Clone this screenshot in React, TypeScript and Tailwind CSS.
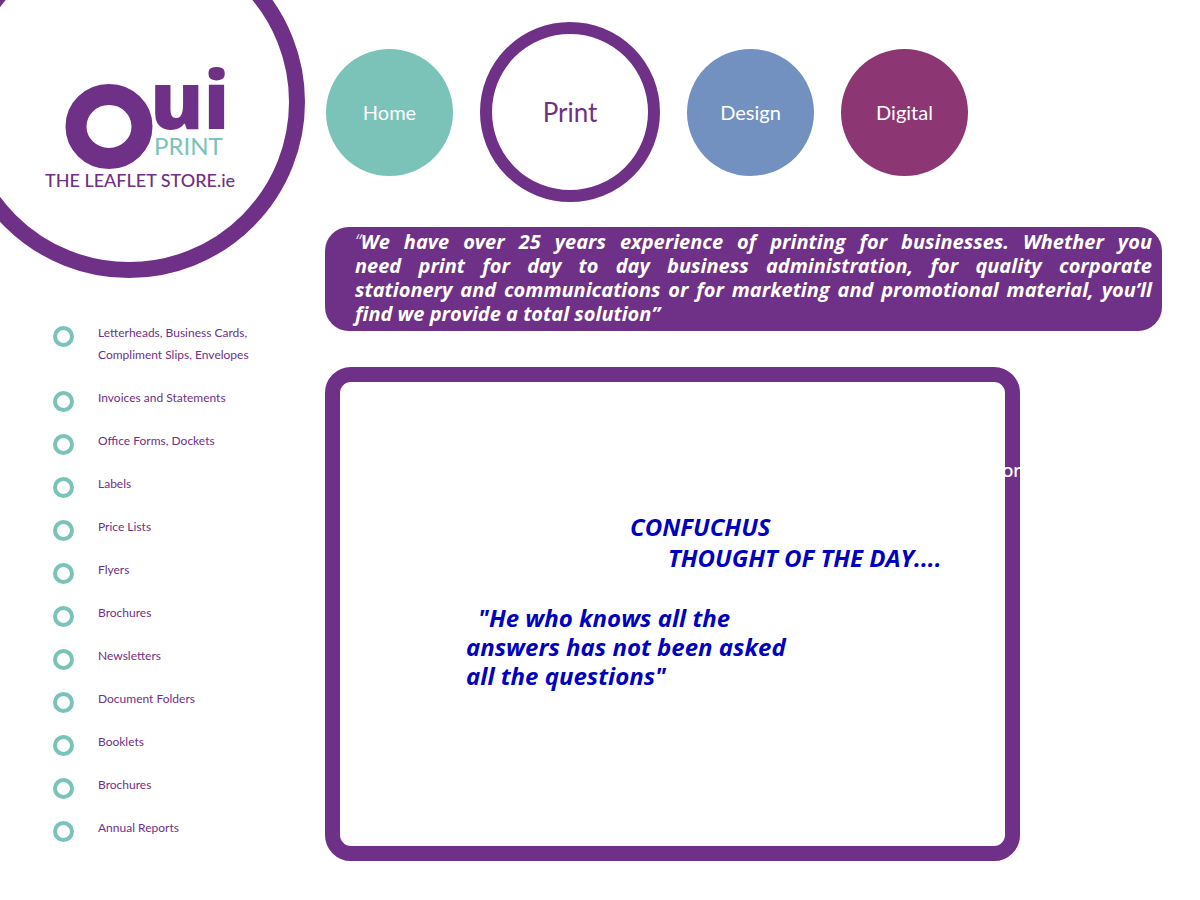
const services = [
  "Letterheads, Business Cards, Compliment Slips, Envelopes",
  "Invoices and Statements",
  "Office Forms, Dockets",
  "Labels",
  "Price Lists",
  "Flyers",
  "Brochures",
  "Newsletters",
  "Document Folders",
  "Booklets",
  "Brochures",
  "Annual Reports",
];

const navItems = [
  { label: "Home", className: "size-[127px] bg-[#7bc3b8] text-white text-[20px]" },
  { label: "Print", className: "size-[180px] border-12 border-[#6f3087] text-[#6f3087] text-[26px]" },
  { label: "Design", className: "size-[127px] bg-[#7291c1] text-white text-[20px]" },
  { label: "Digital", className: "size-[127px] bg-[#8c3673] text-white text-[20px]" },
];

const introLines = [
  "We have over 25 years experience of printing for businesses. Whether you",
  "need print for day to day business administration, for quality corporate",
  "stationery and communications or for marketing and promotional material, you’ll",
];

function Logo() {
  return (
    <a
      href="#"
      aria-label="Oui Print, The Leaflet Store.ie"
      className="-mt-[74px] -ml-[47px] block size-[352px] rounded-full border-16 border-[#6f3087] pt-[78px] pl-[76px]"
    >
      <svg width="200" height="175" viewBox="45 20 200 175" className="font-['Lato',sans-serif]">
        <ellipse cx="109" cy="126.500" rx="33" ry="32" fill="none" stroke="#6f3087" strokeWidth="21" />
        <text x="150" y="129" fontSize="80" fontWeight="800" fill="#6f3087" className="font-['Open_Sans',sans-serif]">ui</text>
        <text x="154" y="155" fontSize="24" fill="#7bc3b8">PRINT</text>
        <text x="45" y="187" fontSize="18" fontWeight="500" fill="#6f3087">THE LEAFLET STORE.ie</text>
      </svg>
    </a>
  );
}

function ServiceList() {
  return (
    <ul className="mt-11 flex flex-col gap-[21px] pl-[53px]">
      {services.map((service, i) => (
        <li key={i} className="flex items-start gap-6">
          <span className="mt-1 -mb-1 size-[21px] shrink-0 rounded-full border-4 border-[#7bc3b8]" />
          <a href="#" className="w-[160px] text-[12px] leading-[22px] text-[#6f3087]">
            {service}
          </a>
        </li>
      ))}
    </ul>
  );
}

export default function App() {
  return (
    <div className="flex min-h-screen overflow-hidden bg-white font-['Lato',sans-serif]">
      <aside className="w-[325px] shrink-0">
        <Logo />
        <ServiceList />
      </aside>

      <main className="min-w-0 flex-1 pt-[22px] pr-[38px] pb-10">
        <nav className="flex items-center gap-[27px] pl-px">
          {navItems.map((item) => (
            <a
              key={item.label}
              href="#"
              className={`flex shrink-0 items-center justify-center rounded-full ${item.className}`}
            >
              {item.label}
            </a>
          ))}
        </nav>

        <section className="mt-[25px] rounded-3xl bg-[#6f3087] pt-[3px] pb-[5px] pr-[10px] pl-[30px] font-['Open_Sans',sans-serif] text-[20px] leading-6 font-bold text-white italic">
          {introLines.map((line, i) => (
            <p key={line} className="text-justify [text-align-last:justify]">
              {i === 0 && <span className="font-light">“</span>}
              {line}
            </p>
          ))}
          <p>find we provide a total solution”</p>
        </section>

        <section className="relative mt-9 min-h-[494px] w-[83%] rounded-[26px] border-[15px] border-[#6f3087] pt-[129px] pl-[126px] font-['Open_Sans',sans-serif] text-[24px] font-bold text-[#0000c0] italic">
          <h1 className="pl-[164px] leading-[31px]">
            CONFUCHUS
            <span className="block pl-[38px]">THOUGHT OF THE DAY....</span>
          </h1>
          <blockquote className="mt-[30px] leading-[29px]">
            <p className="pl-3">"He who knows all the</p>
            <p>answers has not been asked</p>
            <p>all the questions"</p>
          </blockquote>
          {/* tail of the scrolling message, crossing the frame */}
          <span className="absolute top-[73px] -right-4 font-['Lato',sans-serif] text-[20px] leading-[29px] font-medium text-white not-italic">or</span>
        </section>
      </main>
    </div>
  );
}
